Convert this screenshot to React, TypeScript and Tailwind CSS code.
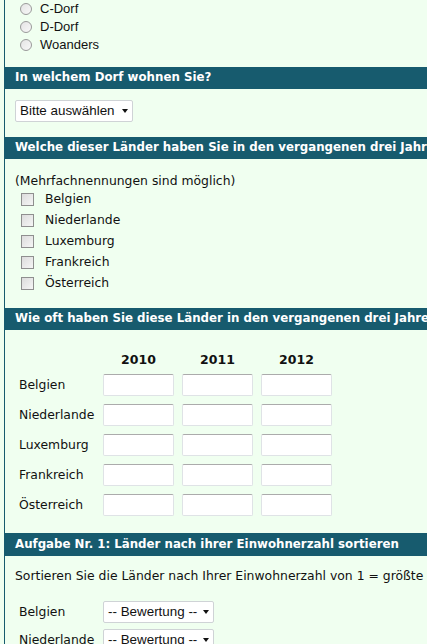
import React from "react";

const verdana = { fontFamily: '"DejaVu Sans", Verdana, sans-serif' };
const arial = { fontFamily: '"Liberation Sans", Arial, sans-serif' };

const countries = ["Belgien", "Niederlande", "Luxemburg", "Frankreich", "Österreich"];
const years = ["2010", "2011", "2012"];

function Header({ children, className = "" }: { children: React.ReactNode; className?: string }) {
  return (
    <div
      className={`flex h-[22px] items-center whitespace-nowrap bg-[#175b6e] pl-[10px] text-[11.8px] font-bold text-white ${className}`}
      style={verdana}
    >
      {children}
    </div>
  );
}

function Radio({ label }: { label: string }) {
  return (
    <div className="flex h-[18px] items-center">
      <span className="ml-[15px] h-[12px] w-[12px] rounded-full border border-[#9a9a9a] bg-gradient-to-br from-[#e4e4e4] to-[#f8f8f8]" />
      <span className="ml-[8px] text-[13px] text-[#111]" style={arial}>
        {label}
      </span>
    </div>
  );
}

function Check({ label }: { label: string }) {
  return (
    <div className="flex h-[21px] items-center">
      <span className="ml-[16px] h-[13px] w-[13px] border border-[#8f8f8f] bg-gradient-to-br from-[#dcdcdc] to-[#f6f6f6]" />
      <span className="ml-[11px]">{label}</span>
    </div>
  );
}

function Select({ text, width }: { text: string; width: string }) {
  return (
    <div
      className={`flex h-[22px] items-center justify-between rounded-[2px] border border-[#cfd3d6] bg-white pl-[4px] pr-[4px] text-[13.4px] text-[#111] ${width}`}
      style={arial}
    >
      <span className="whitespace-nowrap">{text}</span>
      <span className="h-0 w-0 shrink-0 border-x-[3.5px] border-t-[4px] border-x-transparent border-t-[#111]" />
    </div>
  );
}

export default function App() {
  return (
    <div className="h-[644px] w-[427px] overflow-hidden bg-[#f0fff0]">
      <div className="ml-[4px] min-h-[644px] border-l border-[#175b6e] text-[12.4px] text-[#111]" style={verdana}>
        {/* radios */}
        <div className="flex flex-col">
          <Radio label="C-Dorf" />
          <Radio label="D-Dorf" />
          <Radio label="Woanders" />
        </div>

        <Header className="mt-[13px]">In welchem Dorf wohnen Sie?</Header>
        <div className="ml-[10px] mt-[11px]">
          <Select text="Bitte auswählen" width="w-[118px]" />
        </div>

        <Header className="mt-[15px]">Welche dieser Länder haben Sie in den vergangenen drei Jahren besucht?</Header>
        <div className="ml-[10px] mt-[14px] h-[16px] leading-[15px] whitespace-nowrap">(Mehrfachnennungen sind möglich)</div>
        <div className="flex flex-col">
          {countries.map((c) => (
            <Check key={c} label={c} />
          ))}
        </div>

        <Header className="mt-[14px]">Wie oft haben Sie diese Länder in den vergangenen drei Jahren besucht?</Header>
        <div className="ml-[14px] mt-[21px] flex flex-col">
          <div className="flex h-[18px] items-center">
            <div className="w-[84px]" />
            <div className="flex gap-[8px]">
              {years.map((y) => (
                <div key={y} className="w-[71px] text-center text-[12.5px] font-bold">
                  {y}
                </div>
              ))}
            </div>
          </div>
          <div className="mt-[5px] flex flex-col gap-[8px]">
            {countries.map((c) => (
              <div key={c} className="flex h-[22px] items-center">
                <div className="w-[84px] pt-[1px]">{c}</div>
                <div className="flex gap-[8px]">
                  {years.map((y) => (
                    <div
                      key={y}
                      className="h-[22px] w-[71px] rounded-[2px] border border-[#dfe3e6] border-t-[#ababab] bg-white"
                    />
                  ))}
                </div>
              </div>
            ))}
          </div>
        </div>

        <Header className="mt-[17px] h-[23px]">Aufgabe Nr. 1: Länder nach ihrer Einwohnerzahl sortieren</Header>
        <div className="ml-[10px] mt-[12px] h-[16px] whitespace-nowrap leading-[16px]">
          Sortieren Sie die Länder nach Ihrer Einwohnerzahl von 1 = größte bis 5 = kleinste Einwohnerzahl.
        </div>
        <div className="ml-[14px] mt-[17px] flex flex-col gap-[6px]">
          {countries.slice(0, 2).map((c) => (
            <div key={c} className="flex h-[22px] items-center">
              <div className="w-[84px] pt-[1px]">{c}</div>
              <Select text="-- Bewertung --" width="w-[111px]" />
            </div>
          ))}
        </div>
      </div>
    </div>
  );
}
